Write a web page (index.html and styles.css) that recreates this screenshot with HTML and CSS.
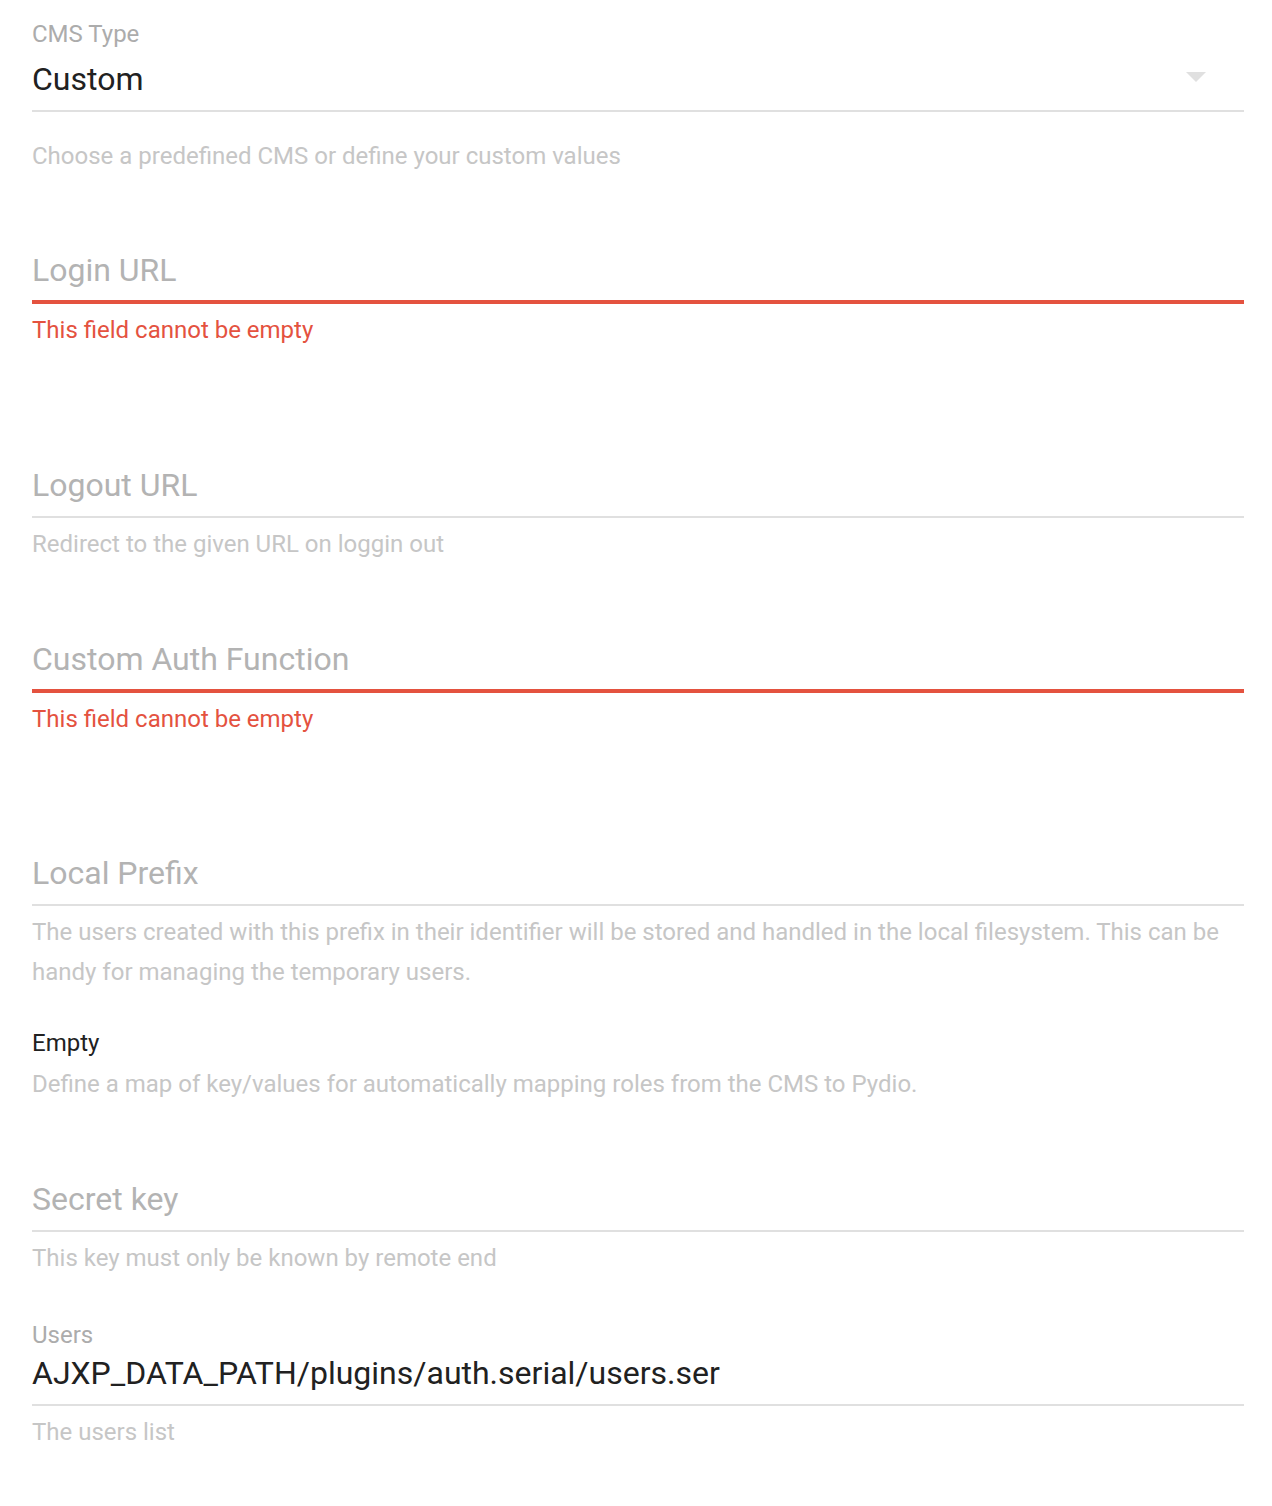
FILE: index.html
```html
<!DOCTYPE html>
<html lang="en">
<head>
<meta charset="utf-8">
<title>Auth settings</title>
<link rel="stylesheet" href="styles.css">
</head>
<body>
<form class="form">
  <div class="select-field">
    <div class="float-label">CMS Type</div>
    <div class="select-value">
      <span>Custom</span>
      <svg class="arrow" width="20" height="10" viewBox="0 0 20 10"><path d="M0 0 L20 0 L10 10 Z" fill="#e0e0e0"/></svg>
    </div>
  </div>
  <div class="hint hint-first">Choose a predefined CMS or define your custom values</div>

  <div class="text-input error login">Login URL</div>
  <div class="error-text">This field cannot be empty</div>

  <div class="text-input logout">Logout URL</div>
  <div class="hint hint-near">Redirect to the given URL on loggin out</div>

  <div class="text-input error auth">Custom Auth Function</div>
  <div class="error-text">This field cannot be empty</div>

  <div class="text-input prefix">Local Prefix</div>
  <div class="hint hint-near">The users created with this prefix in their identifier will be stored and handled in the local filesystem. This can be handy for managing the temporary users.</div>

  <div class="map-title">Empty</div>
  <div class="hint hint-map">Define a map of key/values for automatically mapping roles from the CMS to Pydio.</div>

  <div class="text-input secret">Secret key</div>
  <div class="hint hint-secret">This key must only be known by remote end</div>

  <div class="filled-field">
    <div class="float-label small">Users</div>
    <div class="filled-value">AJXP_DATA_PATH/plugins/auth.serial/users.ser</div>
  </div>
  <div class="hint hint-near">The users list</div>
</form>
</body>
</html>
```

FILE: styles.css
```css
html, body {
  margin: 0;
  padding: 0;
  background: #ffffff;
}

body {
  font-family: Roboto, "Noto Sans", "Liberation Sans", sans-serif;
}

.form {
  display: flex;
  flex-direction: column;
  padding: 0 28px 40px 32px;
}

.select-field {
  padding-top: 16px;
  padding-bottom: 5px;
  border-bottom: 2px solid #e0e0e0;
}

.float-label {
  font-size: 24px;
  line-height: 37px;
  color: #acacac;
}

.float-label.small {
  line-height: 30px;
}

.select-value {
  display: flex;
  align-items: center;
  justify-content: space-between;
  font-size: 32px;
  line-height: 52px;
  color: #212121;
}

.arrow {
  margin-right: 38px;
  margin-top: -4px;
}

.hint {
  font-size: 24px;
  line-height: 40px;
  color: #c6c6c6;
}

.hint-first { margin-top: 24px; }
.hint-near { margin-top: 6px; }
.hint-map { margin-top: 1px; }
.hint-secret { margin-top: 6px; }

.text-input {
  font-size: 32px;
  line-height: 58px;
  color: #b3b3b3;
  padding-bottom: 2px;
  border-bottom: 2px solid #e0e0e0;
}

.text-input.error {
  padding-bottom: 1px;
  border-bottom: 4px solid #e4523f;
}

.login { margin-top: 65px; }
.logout { margin-top: 106px; }
.auth { margin-top: 66px; }
.prefix { margin-top: 105px; }
.secret { margin-top: 66px; }

.error-text {
  margin-top: 6px;
  font-size: 24px;
  line-height: 40px;
  color: #e4523f;
}

.map-title {
  margin-top: 31px;
  font-size: 24px;
  line-height: 40px;
  color: #212121;
}

.filled-field {
  margin-top: 42px;
  padding-bottom: 8px;
  border-bottom: 2px solid #e0e0e0;
}

.filled-value {
  font-size: 32px;
  line-height: 46px;
  color: #212121;
}
```
